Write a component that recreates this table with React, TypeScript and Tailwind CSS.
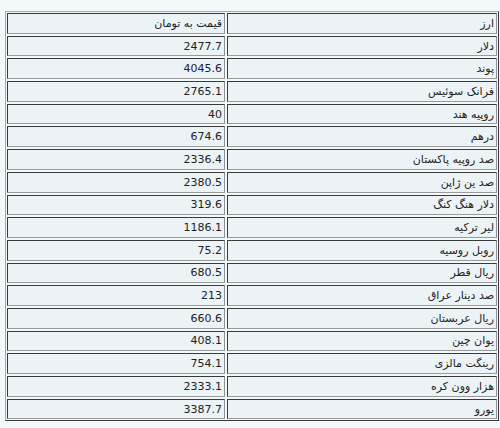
import React from "react";

const rows: [string, string][] = [
  ["ارز", "قیمت به تومان"],
  ["دلار", "2477.7"],
  ["پوند", "4045.6"],
  ["فرانک سوئیس", "2765.1"],
  ["روپیه هند", "40"],
  ["درهم", "674.6"],
  ["صد روپیه پاکستان", "2336.4"],
  ["صد ین ژاپن", "2380.5"],
  ["دلار هنگ کنگ", "319.6"],
  ["لیر ترکیه", "1186.1"],
  ["روبل روسیه", "75.2"],
  ["ریال قطر", "680.5"],
  ["صد دینار عراق", "213"],
  ["ریال عربستان", "660.6"],
  ["یوان چین", "408.1"],
  ["رینگت مالزی", "754.1"],
  ["هزار وون کره", "2333.1"],
  ["یورو", "3387.7"],
];

const cell =
  "h-[20.7px] flex items-center pr-[2px] bg-[#ecf3f6] border border-t-[#3a3a3a] border-r-[#8f8f8f] border-b-[#9a9a9a] border-l-[#3a3a3a] text-[11px] leading-none text-[#222]";

export default function App() {
  return (
    <div
      className="w-[500px] h-[428px] bg-[#f3f8fa] pt-[11px] pl-[5px]"
      style={{ fontFamily: '"DejaVu Sans", sans-serif' }}
    >
      <div
        dir="rtl"
        className="w-[494px] border border-t-[#a8a8a8] border-l-[#a8a8a8] border-r-[#3a3a3a] border-b-[#3a3a3a] p-[1px] grid grid-cols-[270px_218px] gap-[2px]"
      >
        {rows.map(([name, price], i) => (
          <React.Fragment key={i}>
            <div className={cell}>{name}</div>
            <div className={cell}>{price}</div>
          </React.Fragment>
        ))}
      </div>
    </div>
  );
}
